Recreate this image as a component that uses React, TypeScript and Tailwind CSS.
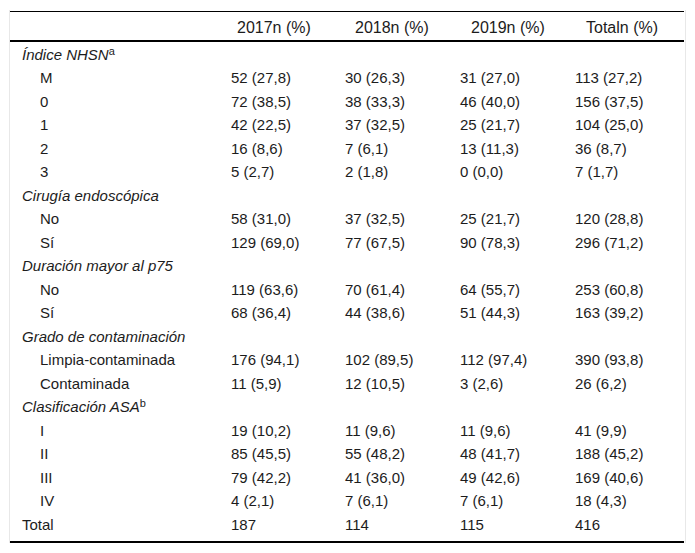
const rows: { label: string; sup?: string; group?: boolean; indent?: boolean; values?: string[] }[] = [
  { label: 'Índice NHSN', sup: 'a', group: true },
  { label: 'M', indent: true, values: ['52 (27,8)', '30 (26,3)', '31 (27,0)', '113 (27,2)'] },
  { label: '0', indent: true, values: ['72 (38,5)', '38 (33,3)', '46 (40,0)', '156 (37,5)'] },
  { label: '1', indent: true, values: ['42 (22,5)', '37 (32,5)', '25 (21,7)', '104 (25,0)'] },
  { label: '2', indent: true, values: ['16 (8,6)', '7 (6,1)', '13 (11,3)', '36 (8,7)'] },
  { label: '3', indent: true, values: ['5 (2,7)', '2 (1,8)', '0 (0,0)', '7 (1,7)'] },
  { label: 'Cirugía endoscópica', group: true },
  { label: 'No', indent: true, values: ['58 (31,0)', '37 (32,5)', '25 (21,7)', '120 (28,8)'] },
  { label: 'Sí', indent: true, values: ['129 (69,0)', '77 (67,5)', '90 (78,3)', '296 (71,2)'] },
  { label: 'Duración mayor al p75', group: true },
  { label: 'No', indent: true, values: ['119 (63,6)', '70 (61,4)', '64 (55,7)', '253 (60,8)'] },
  { label: 'Sí', indent: true, values: ['68 (36,4)', '44 (38,6)', '51 (44,3)', '163 (39,2)'] },
  { label: 'Grado de contaminación', group: true },
  { label: 'Limpia-contaminada', indent: true, values: ['176 (94,1)', '102 (89,5)', '112 (97,4)', '390 (93,8)'] },
  { label: 'Contaminada', indent: true, values: ['11 (5,9)', '12 (10,5)', '3 (2,6)', '26 (6,2)'] },
  { label: 'Clasificación ASA', sup: 'b', group: true },
  { label: 'I', indent: true, values: ['19 (10,2)', '11 (9,6)', '11 (9,6)', '41 (9,9)'] },
  { label: 'II', indent: true, values: ['85 (45,5)', '55 (48,2)', '48 (41,7)', '188 (45,2)'] },
  { label: 'III', indent: true, values: ['79 (42,2)', '41 (36,0)', '49 (42,6)', '169 (40,6)'] },
  { label: 'IV', indent: true, values: ['4 (2,1)', '7 (6,1)', '7 (6,1)', '18 (4,3)'] },
  { label: 'Total', values: ['187', '114', '115', '416'] },
];

function App() {
  return (
    <div className="min-h-screen bg-white pt-[10px] pl-[9px] text-[#1c1c1c] font-['Liberation_Sans',Arial,sans-serif]">
      <div className="w-[677px] border-x border-[#e8e8e8] pt-[1px]">
        <div className="w-[674px] border-t border-black">
          {/* header */}
          <div className="grid grid-cols-[221px_114px_115px_115px_1fr] h-[30px] items-center text-[16px] border-b-2 border-black pt-[4px]">
            <div />
            <div className="pl-[6px]">2017n (%)</div>
            <div className="pl-[10px]">2018n (%)</div>
            <div className="pl-[11px]">2019n (%)</div>
            <div className="pl-[11px]">Totaln (%)</div>
          </div>

          {/* body */}
          <div className="pt-[1px] pb-[4px] border-b-2 border-black text-[15px]">
            {rows.map((r, i) => (
              <div key={i} className="grid grid-cols-[221px_114px_115px_115px_1fr] h-[23.5px] items-center">
                <div className={r.group ? 'pl-[12px] italic' : r.indent ? 'pl-[30px]' : 'pl-[12px]'}>
                  {r.label}
                  {r.sup && <span className="relative -top-[5px] text-[11px] not-italic leading-none">{r.sup}</span>}
                </div>
                {r.values?.map((v, j) => (
                  <div key={j}>{v}</div>
                ))}
              </div>
            ))}
          </div>
        </div>
      </div>
    </div>
  );
}

export default App;
